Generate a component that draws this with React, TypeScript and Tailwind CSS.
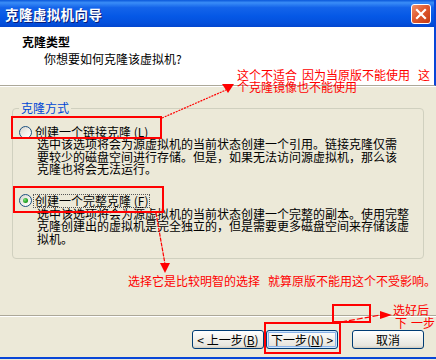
import React from 'react'

const font = 'font-["Noto_Sans_CJK_SC",sans-serif]'

function Radio({ checked }: { checked?: boolean }) {
  return (
    <span className="relative w-[13px] h-[13px] rounded-full border border-[#1C5180] bg-[linear-gradient(135deg,#D6D5CE_0%,#F2F1EC_55%,#FFFFFF_100%)] flex items-center justify-center shrink-0">
      {checked && (
        <span className="w-[5px] h-[5px] rounded-full bg-[radial-gradient(circle_at_35%_35%,#7BE07B_0%,#21A121_60%,#127712_100%)]" />
      )}
    </span>
  )
}

function XpButton({ children, isDefault, ml }: { children: React.ReactNode; isDefault?: boolean; ml: string }) {
  return (
    <button
      className={`w-[72px] h-[19px] rounded-[3px] border border-[#003C74] bg-[linear-gradient(to_bottom,#FFFFFF_0%,#F4F3EE_40%,#E8E6DE_85%,#D6D0C5_100%)] text-[12px] leading-[12px] text-black flex items-center justify-center ${ml} ${
        isDefault ? 'shadow-[inset_0_0_0_1px_#CEE7FF,inset_0_0_0_2px_#8CB2E6]' : 'shadow-[inset_0_-1px_0_#D6D0C5]'
      }`}
    >
      {children}
    </button>
  )
}

export default function App() {
  return (
    <div className={`relative w-[436px] h-[360px] overflow-hidden bg-[#ECE9D8] ${font} text-black`}>
      {/* title bar */}
      <div className="h-[27px] flex items-center justify-between pl-[5px] pr-[3px] border-r-2 border-[#0846D8] bg-[linear-gradient(to_bottom,#0A57DA_0%,#3A8DF7_10%,#1464EA_28%,#0558E6_60%,#0450DC_85%,#0346CF_100%)]">
        <span className="text-white font-bold text-[13.5px] leading-[16px] tracking-[0.4px] [text-shadow:1px_1px_0_#0A1E7A]">
          克隆虚拟机向导
        </span>
        <span className="w-[20px] h-[20px] mt-[1px] rounded-[3px] border border-white bg-[linear-gradient(135deg,#F0906A_0%,#E05A30_45%,#C53A12_100%)] flex items-center justify-center">
          <svg width="12" height="12" viewBox="0 0 12 12">
            <path d="M2 2 L10 10 M10 2 L2 10" stroke="white" strokeWidth="2.2" strokeLinecap="square" />
          </svg>
        </span>
      </div>

      {/* header */}
      <div className="h-[59px] bg-white border-b border-[#ACA899] border-r-2 border-r-[#0846D8] pl-[22px] pt-[9px]">
        <div className="font-bold text-[12px] leading-[12px]">克隆类型</div>
        <div className="text-[12px] leading-[12px] mt-[5px] pl-[22px]">你想要如何克隆该虚拟机?</div>
      </div>

      {/* body */}
      <div className="border-t border-white h-[229px] pt-[21px] px-[12px]">
        <div className="relative h-[151px] rounded-[4px] border border-[#D0D0BF] pt-[16px] pl-[6px]">
          <span className="absolute left-[6px] top-[-8px] px-[2px] bg-[#ECE9D8] text-[#0046D5] text-[12px] leading-[14px]">
            克隆方式
          </span>

          <div className="h-[14px] flex items-center gap-[3px]">
            <Radio />
            <span className="text-[12px] leading-[12px]">
              创建一个链接克隆 (<u>L</u>)
            </span>
          </div>
          <div className="mt-[-1px] pl-[18px] text-[12px] leading-[12.5px]">
            <div>选中该选项将会为源虚拟机的当前状态创建一个引用。链接克隆仅需</div>
            <div>要较少的磁盘空间进行存储。但是，如果无法访问源虚拟机，那么该</div>
            <div>克隆也将会无法运行。</div>
          </div>

          <div className="mt-[18px] h-[14px] flex items-center gap-[2px]">
            <Radio checked />
            <span className="text-[12px] leading-[12px] px-[1px] py-[0px] outline outline-1 outline-dotted outline-[#555]">
              创建一个完整克隆 (<u>F</u>)
            </span>
          </div>
          <div className="pl-[18px] text-[12px] leading-[12.5px]">
            <div>选中该选项将会为源虚拟机的当前状态创建一个完整的副本。使用完整</div>
            <div>克隆创建出的虚拟机是完全独立的，但是需要更多磁盘空间来存储该虚</div>
            <div>拟机。</div>
          </div>
        </div>
      </div>

      {/* footer */}
      <div className="border-t border-[#ACA899]">
        <div className="border-t border-white h-[41px] pt-[13px] pr-[12px] flex justify-end items-start">
          <XpButton ml="">
            &lt; 上一步(<u>B</u>)
          </XpButton>
          <XpButton ml="ml-[2px]" isDefault>
            下一步(<u>N</u>) &gt;
          </XpButton>
          <XpButton ml="ml-[14px]">取消</XpButton>
        </div>
      </div>
      <div className="h-[2px] bg-[#0846D8]" />

      {/* red annotations */}
      <svg className="absolute inset-0 pointer-events-none" width="436" height="360" viewBox="0 0 436 360">
        <g fill="none" stroke="#FF0000" strokeWidth="2">
          <rect x="12" y="117" width="149" height="21" />
          <rect x="14" y="187" width="149" height="25" />
          <rect x="265" y="323" width="75" height="30" />
          <rect x="333" y="305" width="37" height="17" />
        </g>
        <g fill="none" stroke="#FF0000" strokeWidth="1.2">
          <line x1="162" y1="118" x2="226" y2="90" strokeDasharray="2 1" />
          <line x1="156" y1="213" x2="165" y2="264" strokeDasharray="4 1" />
          <line x1="341" y1="322" x2="381" y2="315" strokeDasharray="6 2" />
        </g>
        <g fill="#FF0000">
          <polygon points="222,84 234,84 228,93" />
          <polygon points="160,263 170,263 165,273" />
          <polygon points="380,311 380,319 392,315" />
        </g>
      </svg>

      <div className="absolute left-[237px] top-[69px] text-[#FF0000] text-[12px] leading-[12px] whitespace-nowrap">
        <div>
          这个不适合<span className="ml-[5px]">因为当原版不能使用</span>
          <span className="ml-[8px]">这</span>
        </div>
        <div>个克隆镜像也不能使用</div>
      </div>

      <div className="absolute left-[128px] top-[275px] text-[#FF0000] text-[12px] leading-[12px] whitespace-nowrap">
        选择它是比较明智的选择<span className="ml-[8px]">就算原版不能用这个不受影响。</span>
      </div>

      <div className="absolute left-[393px] top-[304px] text-[#FF0000] text-[12px] leading-[12px] whitespace-nowrap">
        <div>选好后</div>
        <div className="mt-[1px] pl-[2px]">
          下<span className="ml-[4px]">一步</span>
        </div>
      </div>
    </div>
  )
}
